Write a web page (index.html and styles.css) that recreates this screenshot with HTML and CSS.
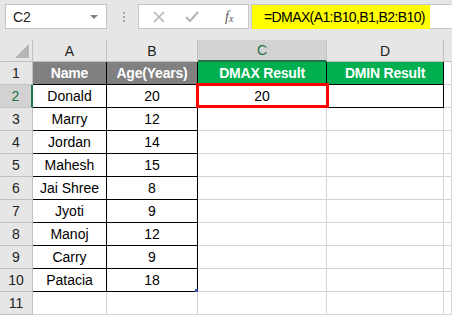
FILE: index.html
```html
<!DOCTYPE html>
<html lang="en">
<head>
    <meta charset="UTF-8">
    <title>DMAX</title>
    <link rel="stylesheet" href="styles.css">
</head>
<body>

<div class="toolbar">
    <div class="namebox">
        <span>C2</span>
        <span class="caret"></span>
    </div>
    <div class="dots">
        <i></i><i></i><i></i>
    </div>
    <div class="buttons">
        <svg width="12" height="12" viewBox="0 0 12 12"><path d="M1 1 L11 11 M11 1 L1 11" stroke="#b3b3b3" stroke-width="1.6"/></svg>
        <svg width="14" height="12" viewBox="0 0 14 12"><path d="M1 6 L5 10 L13 1" stroke="#b3b3b3" stroke-width="2" fill="none"/></svg>
        <span class="fx">f<sub>x</sub></span>
    </div>
    <div class="formula">
        <span class="hl">=DMAX(A1:B10,B1,B2:B10)</span>
    </div>
</div>

<div class="sheet">
    <div class="hd corner"><span class="tri"></span></div>
    <div class="hd">A</div>
    <div class="hd">B</div>
    <div class="hd sel-col">C</div>
    <div class="hd">D</div>
    <div class="hd last"></div>

    <div class="rh">1</div>
    <div class="c bk gray">Name</div>
    <div class="c bk gray">Age(Years)</div>
    <div class="c bk green">DMAX Result</div>
    <div class="c bk green">DMIN Result</div>
    <div class="c"></div>

    <div class="rh sel-row">2</div>
    <div class="c bk">Donald</div>
    <div class="c bk">20</div>
    <div class="c bk active">20</div>
    <div class="c bk"></div>
    <div class="c"></div>

    <div class="rh">3</div>
    <div class="c bk">Marry</div>
    <div class="c bk">12</div>
    <div class="c"></div>
    <div class="c"></div>
    <div class="c"></div>

    <div class="rh">4</div>
    <div class="c bk">Jordan</div>
    <div class="c bk">14</div>
    <div class="c"></div>
    <div class="c"></div>
    <div class="c"></div>

    <div class="rh">5</div>
    <div class="c bk">Mahesh</div>
    <div class="c bk">15</div>
    <div class="c"></div>
    <div class="c"></div>
    <div class="c"></div>

    <div class="rh">6</div>
    <div class="c bk">Jai Shree</div>
    <div class="c bk">8</div>
    <div class="c"></div>
    <div class="c"></div>
    <div class="c"></div>

    <div class="rh">7</div>
    <div class="c bk">Jyoti</div>
    <div class="c bk">9</div>
    <div class="c"></div>
    <div class="c"></div>
    <div class="c"></div>

    <div class="rh">8</div>
    <div class="c bk">Manoj</div>
    <div class="c bk">12</div>
    <div class="c"></div>
    <div class="c"></div>
    <div class="c"></div>

    <div class="rh">9</div>
    <div class="c bk">Carry</div>
    <div class="c bk">9</div>
    <div class="c"></div>
    <div class="c"></div>
    <div class="c"></div>

    <div class="rh">10</div>
    <div class="c bk">Patacia</div>
    <div class="c bk handle">18</div>
    <div class="c"></div>
    <div class="c"></div>
    <div class="c"></div>

    <div class="rh">11</div>
    <div class="c"></div>
    <div class="c"></div>
    <div class="c"></div>
    <div class="c"></div>
    <div class="c"></div>
</div>

</body>
</html>
```

FILE: styles.css
```css
body {
    margin: 0;
    background: #fff;
    font-family: "Liberation Sans", Arial, sans-serif;
    font-size: 14px;
    color: #000;
}
.toolbar {
    display: flex;
    align-items: flex-start;
    height: 40px;
    background: #e6e6e6;
    padding-top: 4px;
    box-sizing: border-box;
}
.namebox {
    display: flex;
    align-items: center;
    justify-content: space-between;
    margin-left: 5px;
    width: 102px;
    height: 25px;
    box-sizing: border-box;
    background: #fff;
    border: 1px solid #c6c6c6;
    padding: 0 8px 0 7px;
    color: #222;
}
.caret {
    width: 0;
    height: 0;
    border-left: 4px solid transparent;
    border-right: 4px solid transparent;
    border-top: 4px solid #808080;
}
.dots {
    display: flex;
    flex-direction: column;
    gap: 2px;
    margin: 8px 0 0 16px;
    width: 15px;
}
.dots i {
    width: 2px;
    height: 2px;
    background: #a6a6a6;
}
.buttons {
    display: flex;
    align-items: center;
    width: 111px;
    height: 25px;
    box-sizing: border-box;
    background: #fff;
    border: 1px solid #c6c6c6;
    padding-left: 14px;
    gap: 20px;
}
.fx {
    font-family: "Liberation Serif", serif;
    font-style: italic;
    font-size: 14px;
    color: #555;
    margin-left: 6px;
}
.fx sub {
    font-size: 10px;
    vertical-align: -1px;
}
.formula {
    flex: 1;
    height: 25px;
    box-sizing: border-box;
    background: #fff;
    border: 1px solid #c6c6c6;
    border-right: none;
    margin-left: 2px;
}
.hl {
    display: inline-block;
    height: 24px;
    line-height: 24px;
    width: 178px;
    box-sizing: border-box;
    padding-left: 12px;
    background: #ffff00;
    color: #000;
    letter-spacing: -0.6px;
}
.sheet {
    display: grid;
    grid-template-columns: 33px 74px 91px 129px 117px 1fr;
    grid-template-rows: 22px repeat(11, 23px);
}
.hd {
    display: flex;
    align-items: center;
    justify-content: center;
    background: #e6e6e6;
    border-right: 1px solid #c0c0c0;
    border-bottom: 1px solid #c0c0c0;
    color: #222;
    box-sizing: border-box;
}
.hd.last {
    border-right: none;
}
.corner {
    position: relative;
}
.tri {
    position: absolute;
    right: 3px;
    bottom: 3px;
    width: 0;
    height: 0;
    border-left: 14px solid transparent;
    border-bottom: 14px solid #b4b4b4;
}
.sel-col {
    background: #d2d2d2;
    border-bottom: 2px solid #217346;
    color: #217346;
}
.rh {
    display: flex;
    align-items: center;
    justify-content: center;
    background: #e6e6e6;
    border-right: 1px solid #c0c0c0;
    border-bottom: 1px solid #c0c0c0;
    color: #222;
    box-sizing: border-box;
}
.sel-row {
    background: #d2d2d2;
    border-right: 2px solid #217346;
    color: #217346;
}
.c {
    display: flex;
    align-items: center;
    justify-content: center;
    border-right: 1px solid #d4d4d4;
    border-bottom: 1px solid #d4d4d4;
    box-sizing: border-box;
    white-space: nowrap;
}
.c.bk {
    border-color: #000;
}
.gray {
    background: #808080;
    color: #fff;
    font-weight: bold;
    letter-spacing: -0.2px;
}
.green {
    background: #00b050;
    color: #fff;
    font-weight: bold;
    letter-spacing: -0.2px;
}
.active {
    position: relative;
}
.active::after {
    content: "";
    position: absolute;
    top: -2px;
    left: -2px;
    right: -3px;
    bottom: -1px;
    border: 3px solid #ff0000;
}
.handle {
    position: relative;
}
.handle::after {
    content: "";
    position: absolute;
    right: -1px;
    bottom: -1px;
    width: 3px;
    height: 3px;
    background: #3a4bb0;
}
```
